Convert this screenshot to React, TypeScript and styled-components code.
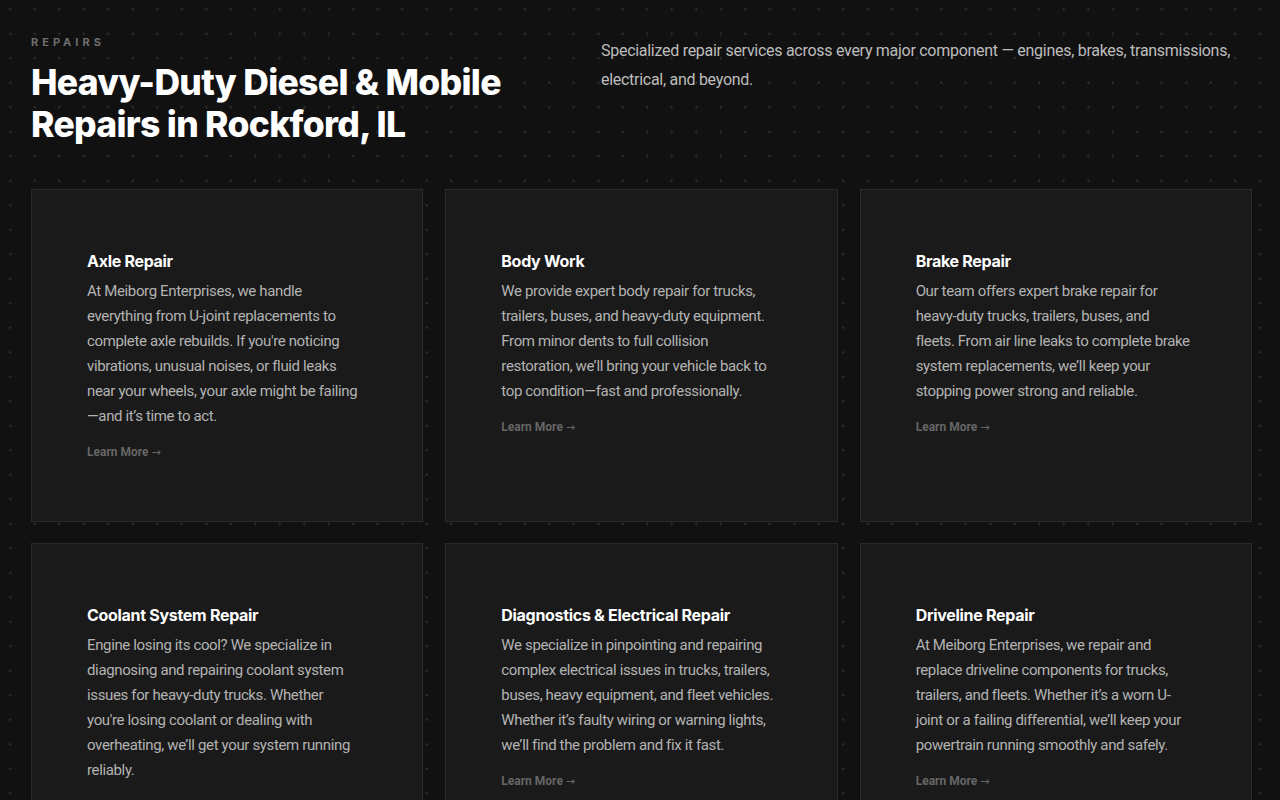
import React from "react";
import styled, { createGlobalStyle } from "styled-components";

interface Repair {
  title: string;
  lines: string[];
}

// Copy is kept line by line so the paragraphs break where the design has them.
const repairs: Repair[] = [
  {
    title: "Axle Repair",
    lines: [
      "At Meiborg Enterprises, we handle",
      "everything from U-joint replacements to",
      "complete axle rebuilds. If you're noticing",
      "vibrations, unusual noises, or fluid leaks",
      "near your wheels, your axle might be failing",
      "\u2014and it\u2019s time to act.",
    ],
  },
  {
    title: "Body Work",
    lines: [
      "We provide expert body repair for trucks,",
      "trailers, buses, and heavy-duty equipment.",
      "From minor dents to full collision",
      "restoration, we\u2019ll bring your vehicle back to",
      "top condition\u2014fast and professionally.",
    ],
  },
  {
    title: "Brake Repair",
    lines: [
      "Our team offers expert brake repair for",
      "heavy-duty trucks, trailers, buses, and",
      "fleets. From air line leaks to complete brake",
      "system replacements, we\u2019ll keep your",
      "stopping power strong and reliable.",
    ],
  },
  {
    title: "Coolant System Repair",
    lines: [
      "Engine losing its cool? We specialize in",
      "diagnosing and repairing coolant system",
      "issues for heavy-duty trucks. Whether",
      "you're losing coolant or dealing with",
      "overheating, we\u2019ll get your system running",
      "reliably.",
    ],
  },
  {
    title: "Diagnostics & Electrical Repair",
    lines: [
      "We specialize in pinpointing and repairing",
      "complex electrical issues in trucks, trailers,",
      "buses, heavy equipment, and fleet vehicles.",
      "Whether it\u2019s faulty wiring or warning lights,",
      "we\u2019ll find the problem and fix it fast.",
    ],
  },
  {
    title: "Driveline Repair",
    lines: [
      "At Meiborg Enterprises, we repair and",
      "replace driveline components for trucks,",
      "trailers, and fleets. Whether it\u2019s a worn U-",
      "joint or a failing differential, we\u2019ll keep your",
      "powertrain running smoothly and safely.",
    ],
  },
];

const GlobalStyle = createGlobalStyle`
  html, body {
    margin: 0;
    padding: 0;
    background-color: #111111;
  }
  body {
    font-family: Roboto, "Liberation Sans", sans-serif;
    -webkit-font-smoothing: antialiased;
  }
`;

const App: React.FC = () => {
  return (
    <>
      <GlobalStyle />
      <Page>
        <Header>
          <HeaderLeft>
            <Eyebrow>Repairs</Eyebrow>
            <Heading>Heavy-Duty Diesel &amp; Mobile Repairs in Rockford, IL</Heading>
          </HeaderLeft>
          <Intro>
            Specialized repair services across every major component — engines,
            brakes, transmissions, electrical, and beyond.
          </Intro>
        </Header>
        <CardGrid>
          {repairs.map((r) => (
            <RepairCard key={r.title} repair={r} />
          ))}
        </CardGrid>
      </Page>
    </>
  );
};

export default App;

function RepairCard({ repair }: { repair: Repair }) {
  return (
    <Card>
      <CardTitle>{repair.title}</CardTitle>
      <CardDesc>
        {repair.lines.map((line) => (
          <DescLine key={line}>{line}</DescLine>
        ))}
      </CardDesc>
      <LearnMore href="#">
        Learn More <Arrow>→</Arrow>
      </LearnMore>
    </Card>
  );
}

const Page = styled.div`
  min-height: 100vh;
  box-sizing: border-box;
  padding: 36px 28px 60px 31px;
  background-color: #111111;
  background-image: radial-gradient(circle, #2e2e2e 1px, transparent 1.3px);
  background-size: 24.5px 24.5px;
  background-position: -2px -3px;
`;

const Header = styled.header`
  display: grid;
  grid-template-columns: 1fr 651px;
  align-items: start;
  margin-bottom: 43px;
`;

const HeaderLeft = styled.div`
  display: flex;
  flex-direction: column;
`;

const Eyebrow = styled.span`
  font-family: Inter, "Liberation Sans", sans-serif;
  font-size: 11px;
  line-height: 13px;
  font-weight: 700;
  letter-spacing: 4px;
  text-transform: uppercase;
  color: #6f6f6f;
  margin-bottom: 13px;
`;

const Heading = styled.h1`
  margin: 0;
  max-width: 520px;
  font-family: Inter, "Liberation Sans", sans-serif;
  font-size: 35.5px;
  line-height: 42px;
  font-weight: 800;
  letter-spacing: -0.7px;
  color: #ffffff;
`;

const Intro = styled.p`
  margin: 0;
  font-size: 16px;
  line-height: 29px;
  letter-spacing: -0.28px;
  color: #bdbdbd;
`;

const CardGrid = styled.div`
  display: grid;
  grid-template-columns: repeat(3, 1fr);
  column-gap: 22px;
  row-gap: 21px;
`;

const Card = styled.div`
  display: flex;
  flex-direction: column;
  align-items: flex-start;
  box-sizing: border-box;
  padding: 60px 50px 58px 55px;
  background-color: #1a1a1a;
  border: 1px solid #2a2a2a;
`;

const CardTitle = styled.h3`
  margin: 0 0 7px 0;
  font-family: Inter, "Liberation Sans", sans-serif;
  font-size: 16px;
  line-height: 22px;
  font-weight: 700;
  letter-spacing: -0.3px;
  color: #ffffff;
`;

const CardDesc = styled.p`
  margin: 0;
  font-size: 15px;
  line-height: 25px;
  letter-spacing: -0.36px;
  color: #b3b3b3;
`;

const DescLine = styled.span`
  display: block;
  white-space: nowrap;
`;

const LearnMore = styled.a`
  margin-top: 13px;
  font-size: 12px;
  line-height: 20px;
  font-weight: 700;
  color: #666666;
  text-decoration: none;
`;

const Arrow = styled.span`
  font-family: "DejaVu Sans", sans-serif;
  font-weight: 400;
  font-size: 11px;
`;
